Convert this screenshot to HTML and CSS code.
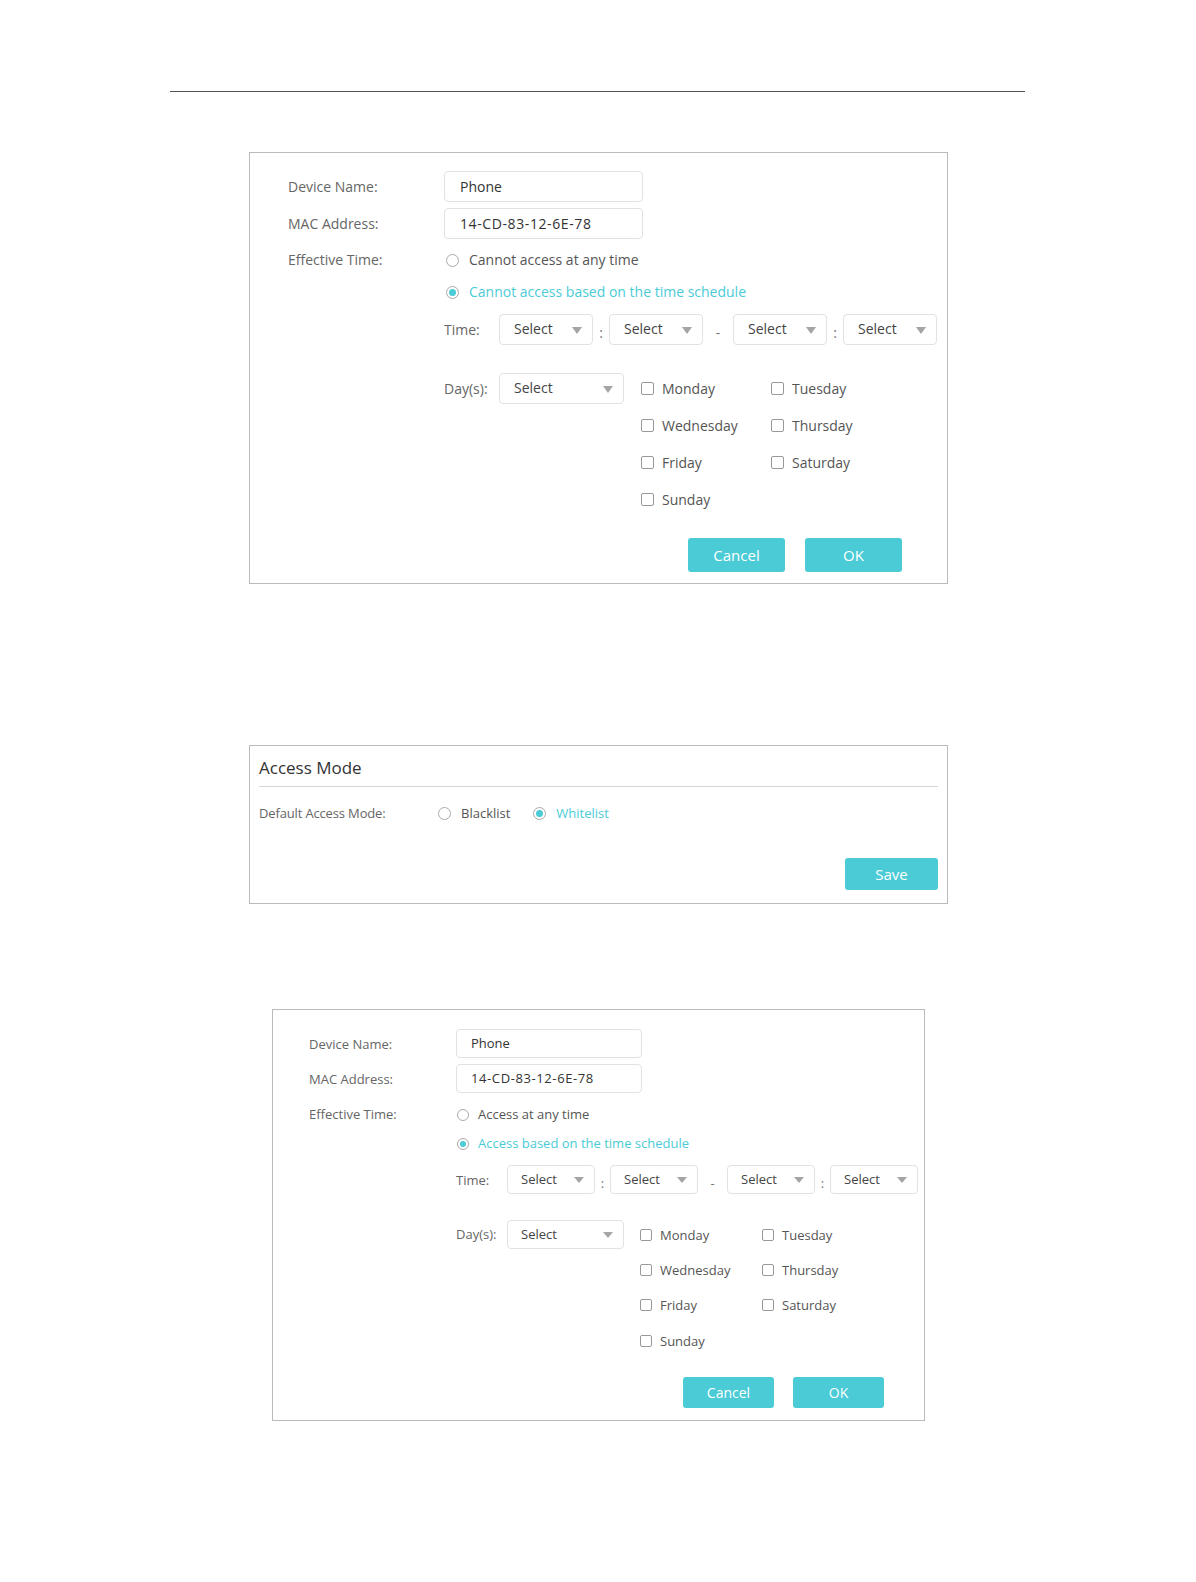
FILE: index.html
```html
<!DOCTYPE html>
<html lang="en">
<head>
    <meta charset="UTF-8">
    <meta name="viewport" content="width=device-width, initial-scale=1.0">
    <title>Access Control</title>
    <link rel="stylesheet" href="styles.css">
</head>
<body>
    <div class="page-rule"></div>

    <!-- Blacklist device form -->
    <div class="panel">
        <div class="row">
            <span class="label">Device Name:</span>
            <div class="field">Phone</div>
        </div>
        <div class="row">
            <span class="label">MAC Address:</span>
            <div class="field mac">14-CD-83-12-6E-78</div>
        </div>
        <div class="row effective">
            <span class="label">Effective Time:</span>
            <div class="options">
                <div class="option"><span class="radio"></span>Cannot access at any time</div>
                <div class="option checked"><span class="radio"></span>Cannot access based on the time schedule</div>
                <div class="time-row">
                    <span class="sub-label">Time:</span>
                    <div class="select">Select</div>
                    <span class="sep">:</span>
                    <div class="select">Select</div>
                    <span class="sep dash">-</span>
                    <div class="select">Select</div>
                    <span class="sep">:</span>
                    <div class="select">Select</div>
                </div>
                <div class="day-row">
                    <span class="sub-label">Day(s):</span>
                    <div class="select wide">Select</div>
                    <div class="days">
                        <div class="day"><span class="box"></span>Monday</div>
                        <div class="day"><span class="box"></span>Tuesday</div>
                        <div class="day"><span class="box"></span>Wednesday</div>
                        <div class="day"><span class="box"></span>Thursday</div>
                        <div class="day"><span class="box"></span>Friday</div>
                        <div class="day"><span class="box"></span>Saturday</div>
                        <div class="day"><span class="box"></span>Sunday</div>
                    </div>
                </div>
            </div>
        </div>
        <div class="actions">
            <button class="btn">Cancel</button>
            <button class="btn">OK</button>
        </div>
    </div>

    <!-- Access mode -->
    <div class="panel mode-panel">
        <div class="mode-title">Access Mode</div>
        <div class="mode-row">
            <span class="mode-label">Default Access Mode:</span>
            <div class="option"><span class="radio"></span>Blacklist</div>
            <div class="option checked"><span class="radio"></span>Whitelist</div>
        </div>
        <div class="mode-footer">
            <button class="btn save">Save</button>
        </div>
    </div>

    <!-- Whitelist device form -->
    <div class="panel compact">
        <div class="row">
            <span class="label">Device Name:</span>
            <div class="field">Phone</div>
        </div>
        <div class="row">
            <span class="label">MAC Address:</span>
            <div class="field mac">14-CD-83-12-6E-78</div>
        </div>
        <div class="row effective">
            <span class="label">Effective Time:</span>
            <div class="options">
                <div class="option"><span class="radio"></span>Access at any time</div>
                <div class="option checked"><span class="radio"></span>Access based on the time schedule</div>
                <div class="time-row">
                    <span class="sub-label">Time:</span>
                    <div class="select">Select</div>
                    <span class="sep">:</span>
                    <div class="select">Select</div>
                    <span class="sep dash">-</span>
                    <div class="select">Select</div>
                    <span class="sep">:</span>
                    <div class="select">Select</div>
                </div>
                <div class="day-row">
                    <span class="sub-label">Day(s):</span>
                    <div class="select wide">Select</div>
                    <div class="days">
                        <div class="day"><span class="box"></span>Monday</div>
                        <div class="day"><span class="box"></span>Tuesday</div>
                        <div class="day"><span class="box"></span>Wednesday</div>
                        <div class="day"><span class="box"></span>Thursday</div>
                        <div class="day"><span class="box"></span>Friday</div>
                        <div class="day"><span class="box"></span>Saturday</div>
                        <div class="day"><span class="box"></span>Sunday</div>
                    </div>
                </div>
            </div>
        </div>
        <div class="actions">
            <button class="btn">Cancel</button>
            <button class="btn">OK</button>
        </div>
    </div>
</body>
</html>
```

FILE: styles.css
```css
body {
    margin: 0;
    font-family: "Open Sans", "Liberation Sans", Arial, sans-serif;
    font-size: 14px;
    color: #666;
    background: #fff;
}
.page-rule {
    margin: 91px 0 0 170px;
    width: 855px;
    border-top: 1px solid #555;
}

/* panels */
.panel {
    margin: 60px 0 0 249px;
    width: 699px;
    box-sizing: border-box;
    border: 1px solid #bbb;
    padding: 18px 10px 11px 38px;
}
.row {
    display: flex;
    align-items: center;
}
.row + .row {
    margin-top: 6px;
}
.row.effective {
    align-items: flex-start;
    margin-top: 5px;
}
.label {
    width: 156px;
    flex: none;
}
.row.effective .label {
    line-height: 32px;
}
.field {
    width: 199px;
    height: 31px;
    box-sizing: border-box;
    border: 1px solid #e2e2e2;
    border-radius: 4px;
    padding-left: 15px;
    line-height: 29px;
    color: #333;
}
.field.mac {
    letter-spacing: 0.6px;
}

/* radios */
.option {
    display: flex;
    align-items: center;
    line-height: 32px;
    color: #555;
}
.option.checked {
    color: #4acbd6;
}
.radio {
    width: 13px;
    height: 13px;
    box-sizing: border-box;
    border: 1px solid #aaa;
    border-radius: 50%;
    margin: 0 10px 0 2px;
    display: flex;
    align-items: center;
    justify-content: center;
    flex: none;
}
.option.checked .radio::after {
    content: "";
    width: 7px;
    height: 7px;
    border-radius: 50%;
    background: #4acbd6;
}

/* time / day pickers */
.time-row {
    display: flex;
    align-items: center;
    margin-top: 6px;
}
.sub-label {
    width: 55px;
    flex: none;
}
.select {
    position: relative;
    width: 94px;
    height: 31px;
    box-sizing: border-box;
    border: 1px solid #e2e2e2;
    border-radius: 4px;
    padding-left: 14px;
    line-height: 28px;
    color: #444;
    flex: none;
}
.select::after {
    content: "";
    position: absolute;
    right: 10px;
    top: 12px;
    border-left: 5px solid transparent;
    border-right: 5px solid transparent;
    border-top: 7px solid #a5a5a5;
}
.select.wide {
    width: 125px;
    margin-top: 3px;
}
.sep {
    width: 16px;
    text-align: center;
    padding-top: 6px;
    color: #777;
    flex: none;
}
.sep.dash {
    width: 30px;
}
.day-row {
    display: flex;
    align-items: flex-start;
    margin-top: 25px;
}
.day-row .sub-label {
    line-height: 37px;
}
.days {
    display: grid;
    grid-template-columns: 130px 130px;
    grid-auto-rows: 37px;
    margin-left: 17px;
}
.day {
    display: flex;
    align-items: center;
    color: #555;
}
.box {
    width: 13px;
    height: 13px;
    box-sizing: border-box;
    border: 1px solid #999;
    border-radius: 2px;
    margin-right: 8px;
    flex: none;
}

/* buttons */
.actions {
    display: flex;
    justify-content: flex-end;
    gap: 20px;
    margin: 20px 35px 0 0;
}
.btn {
    width: 97px;
    height: 34px;
    border: none;
    border-radius: 3px;
    background-color: #4acbd6;
    color: #fff;
    font-family: inherit;
    font-size: 15px;
    padding: 0;
}

/* access mode */
.panel.mode-panel {
    margin-top: 161px;
    padding: 10px 9px 13px;
}
.mode-title {
    font-size: 17px;
    line-height: 24px;
    color: #333;
    padding-bottom: 6px;
    border-bottom: 1px solid #d5d5d5;
}
.mode-row {
    display: flex;
    align-items: center;
    margin-top: 14px;
    font-size: 13px;
    line-height: 24px;
}
.mode-label {
    width: 179px;
    flex: none;
    letter-spacing: -0.15px;
}
.mode-row .option {
    line-height: 24px;
    margin-right: 23px;
}
.mode-row .radio {
    width: 13px;
    height: 13px;
    margin-left: 0;
}
.mode-row .option.checked .radio::after {
    width: 7px;
    height: 7px;
}
.mode-footer {
    display: flex;
    justify-content: flex-end;
    margin-top: 33px;
}
.btn.save {
    width: 93px;
    height: 32px;
}

/* smaller copy of the device form */
.panel.compact {
    margin: 105px 0 0 272px;
    width: 653px;
    padding: 19px 10px 12px 36px;
    font-size: 13px;
}
.compact .label {
    width: 147px;
}
.compact .field {
    width: 186px;
    height: 29px;
    line-height: 27px;
    padding-left: 14px;
}
.compact .row.effective {
    margin-top: 7px;
}
.compact .row.effective .label,
.compact .option {
    line-height: 29px;
}
.compact .radio {
    width: 12px;
    height: 12px;
    margin: 0 9px 0 1px;
}
.compact .option.checked .radio::after {
    width: 6px;
    height: 6px;
}
.compact .time-row {
    margin-top: 7px;
}
.compact .sub-label {
    width: 51px;
}
.compact .select {
    width: 88px;
    height: 29px;
    line-height: 26px;
    padding-left: 13px;
}
.compact .select::after {
    top: 11px;
    right: 10px;
    border-left-width: 5px;
    border-right-width: 5px;
    border-top-width: 6px;
}
.compact .select.wide {
    width: 117px;
    margin-top: 3px;
}
.compact .sep {
    width: 15px;
}
.compact .sep.dash {
    width: 29px;
}
.compact .day-row {
    margin-top: 23px;
}
.compact .day-row .sub-label {
    line-height: 35px;
}
.compact .days {
    grid-template-columns: 122px 122px;
    grid-auto-rows: 35.3px;
    margin-left: 16px;
}
.compact .box {
    width: 12px;
    height: 12px;
}
.compact .actions {
    gap: 19px;
    margin: 19px 30px 0 0;
}
.compact .btn {
    width: 91px;
    height: 31px;
    font-size: 14px;
}
```
